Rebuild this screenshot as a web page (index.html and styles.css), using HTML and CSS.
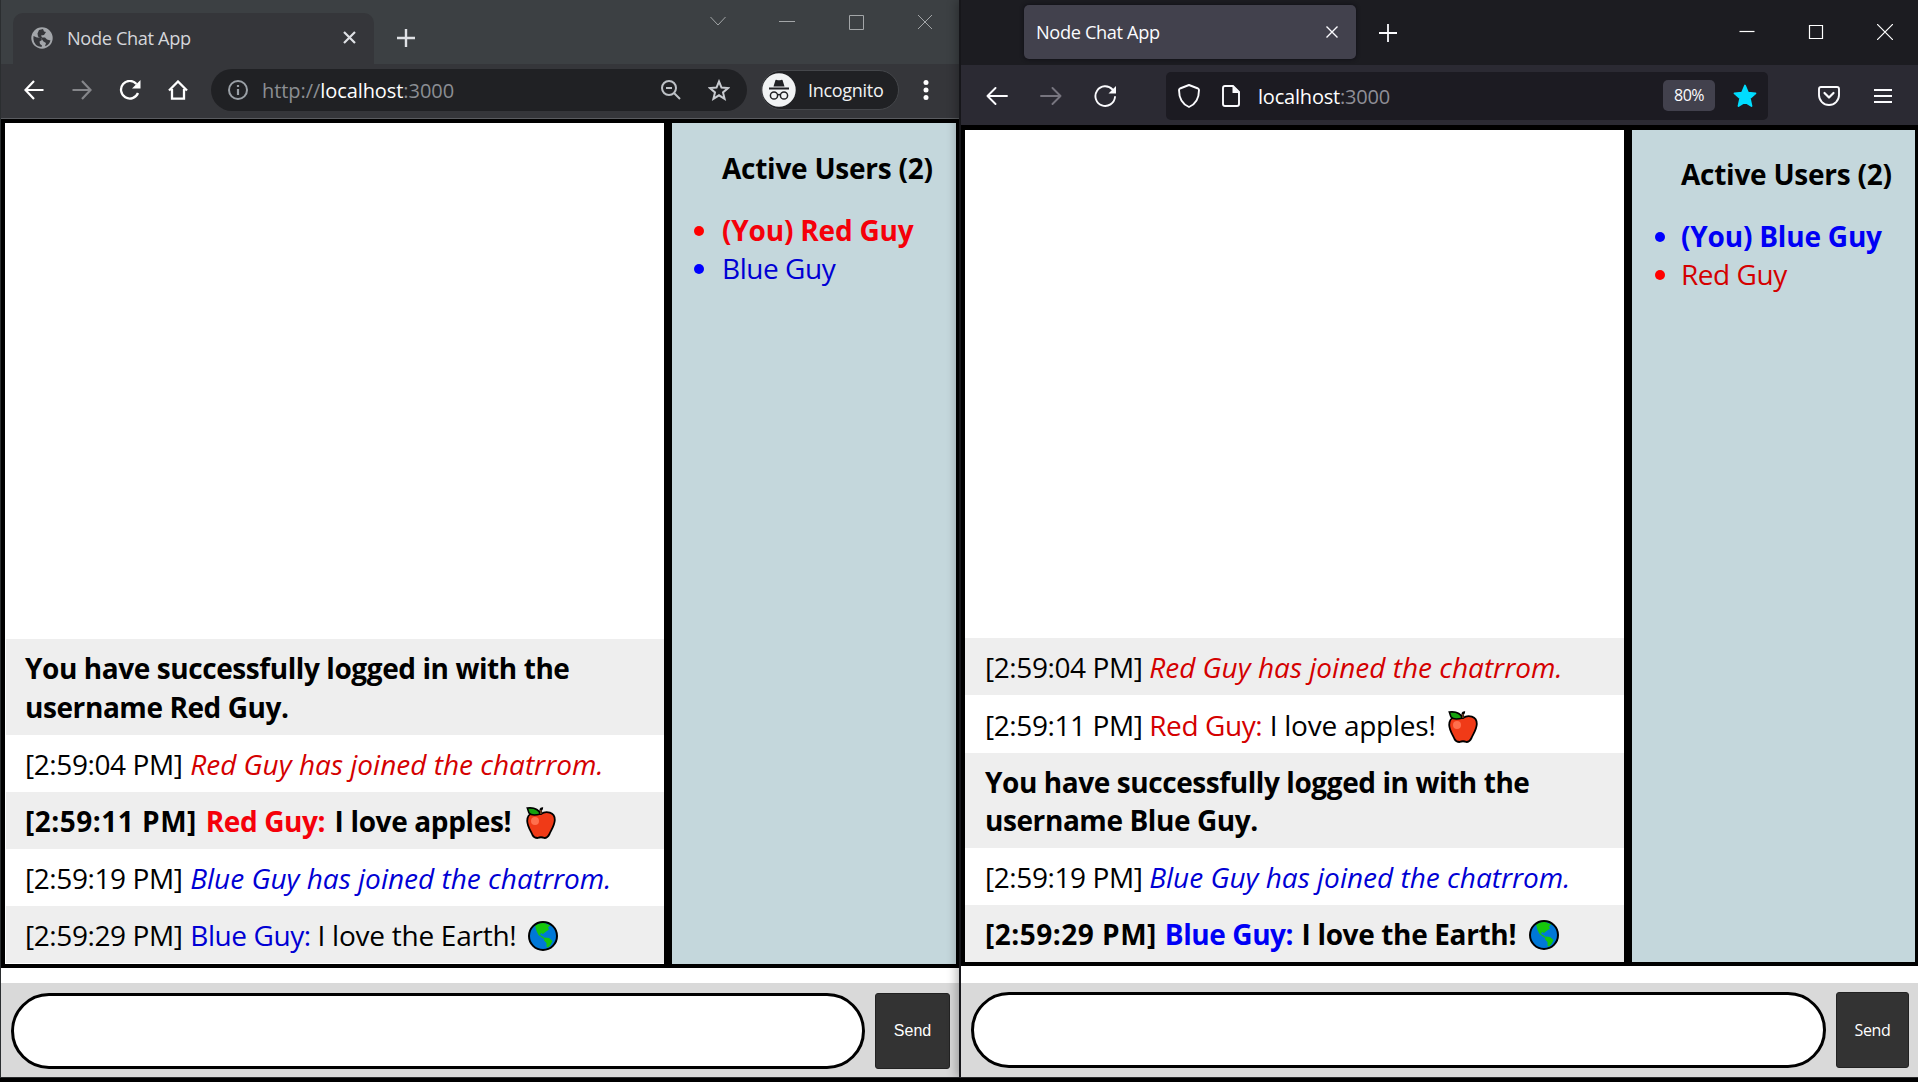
FILE: index.html
```html
<!DOCTYPE html>
<html lang="en">
<head>
<meta charset="utf-8">
<title>Node Chat App</title>
<link rel="stylesheet" href="styles.css">
</head>
<body>
<svg class="symbols" width="0" height="0">
  <symbol id="apple" viewBox="0 0 30 32">
    <path d="M15 7C11 4 1 5 1.200 14C1.500 20 5 24 6.500 28Q8 31 11.500 31Q15 29.500 18.500 31Q21.500 31 23.500 27C25 23 28.500 19 28.800 13C29 5 20 3.500 15 7Z" fill="#f03a17" stroke="#000" stroke-width="1.800"/>
    <circle cx="9" cy="14" r="4" fill="#ff6f4d"/>
    <path d="M1.300 1C6 .5 12 .5 14.500 7Q6 9.500 3 6Z" fill="#16a10e" stroke="#000" stroke-width="1.600"/>
    <path d="M14.800 7V3Q14.800 1.200 17 1.500" fill="none" stroke="#000" stroke-width="2.600"/>
    <path d="M14.900 7V3" stroke="#8e562e" stroke-width="1.200"/>
  </symbol>
  <symbol id="earth" viewBox="0 0 30 30">
    <circle cx="15" cy="15" r="14" fill="#0078d7"/>
    <path d="M7 4.500Q12 1 17 2L19 3.500H23L20 6.500 21 8.500 17.500 11 15 13 13 12 12 14 15 15.500 17 18 15 17.500 10.500 14 8.500 10Z" fill="#16c60c"/>
    <path d="M16.500 16.500L21 17 24.500 20 22.500 24 20 26.500 18.500 26 18.500 22 16 19.500Z" fill="#16c60c"/>
    <circle cx="15" cy="15" r="14" fill="none" stroke="#000" stroke-width="2"/>
  </symbol>
</svg>

<section class="window chrome">
  <div class="titlebar">
    <div class="tab">
      <svg class="favicon" width="22" height="22" viewBox="0 0 22 22"><circle cx="11" cy="11" r="10.700" fill="#a3a6aa"/><path d="M2.500 9L6 10.500H9.500L11 13 8.500 14.500 9 17 11 18.500 10.500 20Q3 19 2.400 12Z M8 3L12 2 13 4.500 15 5 13 8 10 8.500 11 10.500H14L16 12.500 19.500 13.500Q18 18 14 19.300L15 16 12.500 14.500 10 11 7 9.500 6.500 6.500Z" fill="#35363a"/></svg>
      <span class="tab-title">Node Chat App</span>
      <svg class="tab-close" width="13" height="13" viewBox="0 0 13 13"><path d="M1 1L12 12M12 1L1 12" stroke="#dfe1e5" stroke-width="2.200"/></svg>
    </div>
    <svg class="new-tab" width="18" height="18" viewBox="0 0 18 18"><path d="M9 0V18M0 9H18" stroke="#dfe1e5" stroke-width="2.400"/></svg>
    <div class="controls">
      <svg width="16" height="16" viewBox="0 0 16 16"><path d="M.5 3L8 11 15.500 3"/></svg>
      <svg width="16" height="16" viewBox="0 0 16 16"><path d="M0 7.500H16"/></svg>
      <svg width="16" height="16" viewBox="0 0 16 16"><path d="M1.500 1.500H15.500V15.500H1.500Z"/></svg>
      <svg width="16" height="16" viewBox="0 0 16 16"><path d="M1 1L15 15M15 1L1 15"/></svg>
    </div>
  </div>
  <div class="toolbar">
    <svg class="tool back" width="20" height="20" viewBox="0 0 20 20"><path d="M19.500 10H2M10 1L1.500 10 10 19" fill="none" stroke="#fff" stroke-width="2.200"/></svg>
    <svg class="tool forward" width="20" height="20" viewBox="0 0 20 20"><path d="M.5 10H18M10 1L18.500 10 10 19" fill="none" stroke="#85868a" stroke-width="2.200"/></svg>
    <svg class="tool reload" width="22" height="20" viewBox="0 0 22 20"><path d="M17.500 4A8.800 8.800 0 1 0 19 13" fill="none" stroke="#fff" stroke-width="2.300"/><path d="M21.500 0V8.500H13Z" fill="#fff"/></svg>
    <svg class="tool home" width="20" height="20" viewBox="0 0 20 20"><path d="M1 10.500L10 1.500 19 10.500M4 9V18.700H16V9" fill="none" stroke="#fff" stroke-width="2.300"/></svg>
    <div class="omnibox">
      <svg class="info" width="20" height="20" viewBox="0 0 20 20"><circle cx="10" cy="10" r="9" fill="none" stroke="#9aa0a6" stroke-width="2"/><path d="M10 5V7M10 9V15" stroke="#9aa0a6" stroke-width="2.200"/></svg>
      <span class="url">http://<b>localhost</b>:3000</span>
      <svg class="zoom-out" width="20" height="20" viewBox="0 0 20 20"><g fill="none" stroke="#bdc1c6" stroke-width="2"><circle cx="8" cy="8" r="7"/><path d="M5 8H11M13 13L19 19"/></g></svg>
      <svg class="star" width="22" height="22" viewBox="0 0 22 22"><path d="M11 2.500L13.500 8.600 20 9.100 15 13.400 16.600 19.800 11 16.300 5.400 19.800 7 13.400 2 9.100 8.500 8.600Z" fill="none" stroke="#c8cbd0" stroke-width="2"/></svg>
    </div>
    <div class="incognito">
      <svg width="34" height="34" viewBox="0 0 34 34"><circle cx="17" cy="17" r="16.700" fill="#f1f3f4"/><path d="M11.500 13.500L13.500 7Q14 6.300 15 7Q17 7.700 19 7Q20 6.300 20.500 7L22.500 13.500ZM7 14.500H27V16.500H7Z" fill="#202124"/><g fill="none" stroke="#202124" stroke-width="1.500"><circle cx="12" cy="22.500" r="3.600"/><circle cx="22" cy="22.500" r="3.600"/><path d="M15.500 22Q17 21 18.500 22"/></g></svg>
      <span class="incognito-label">Incognito</span>
    </div>
    <svg class="menu" width="6" height="20" viewBox="0 0 6 20"><g fill="#fff"><circle cx="3" cy="2.500" r="2.500"/><circle cx="3" cy="10" r="2.500"/><circle cx="3" cy="17.500" r="2.500"/></g></svg>
  </div>
  <main class="page">
    <div class="chat">
      <ul class="messages">
        <li class="message own">You have successfully logged in with the<br>username Red Guy.</li>
        <li class="message"><span class="time">[2:59:04 PM]</span><i class="red">Red Guy has joined the chatrrom.</i></li>
        <li class="message own"><span class="time">[2:59:11 PM]</span><span class="name red">Red Guy:</span><span class="text apples">I love apples!</span><svg class="emoji" width="30" height="32"><use href="#apple"/></svg></li>
        <li class="message"><span class="time">[2:59:19 PM]</span><i class="blue">Blue Guy has joined the chatrrom.</i></li>
        <li class="message"><span class="time">[2:59:29 PM]</span><span class="name blue">Blue Guy:</span><span class="text planet">I love the Earth!</span><svg class="emoji" width="30" height="30"><use href="#earth"/></svg></li>
      </ul>
      <aside class="users">
        <h2>Active Users (2)</h2>
        <ul>
          <li class="red you">(You) Red Guy</li>
          <li class="blue">Blue Guy</li>
        </ul>
      </aside>
    </div>
    <form class="composer">
      <input class="entry" type="text" aria-label="Message">
      <button class="send" type="button">Send</button>
    </form>
  </main>
</section>

<section class="window firefox">
  <div class="titlebar">
    <div class="tab">
      <span class="tab-title">Node Chat App</span>
      <svg class="tab-close" width="12" height="12" viewBox="0 0 12 12"><path d="M.5 .5L11.500 11.500M11.500 .5L.5 11.500" stroke="#fbfbfe" stroke-width="1.400"/></svg>
    </div>
    <svg class="new-tab" width="18" height="18" viewBox="0 0 18 18"><path d="M9 0V18M0 9H18" stroke="#fbfbfe" stroke-width="1.800"/></svg>
    <div class="controls">
      <svg width="16" height="16" viewBox="0 0 16 16"><path d="M.5 7.500H15.500"/></svg>
      <svg width="16" height="16" viewBox="0 0 16 16"><path d="M1.500 1.500H14.500V14.500H1.500Z"/></svg>
      <svg width="16" height="16" viewBox="0 0 16 16"><path d="M0 0L16 16M16 0L0 16"/></svg>
    </div>
  </div>
  <div class="toolbar">
    <svg class="tool back" width="22" height="18" viewBox="0 0 22 18"><path d="M21 9H1.500M9.500 1L1.500 9 9.500 17" fill="none" stroke="#fbfbfe" stroke-width="1.900" stroke-linecap="round" stroke-linejoin="round"/></svg>
    <svg class="tool forward" width="22" height="18" viewBox="0 0 22 18"><path d="M1 9H20.500M12.500 1L20.500 9 12.500 17" fill="none" stroke="#77757f" stroke-width="1.900" stroke-linecap="round" stroke-linejoin="round"/></svg>
    <svg class="tool reload" width="23" height="22" viewBox="0 0 23 22"><path d="M18.500 4.500A9.800 9.800 0 1 0 21 12" fill="none" stroke="#fbfbfe" stroke-width="1.900" stroke-linecap="round"/><path d="M22 1V8.500H14.500Z" fill="#fbfbfe"/></svg>
    <div class="omnibox">
      <svg class="shield" width="22" height="24" viewBox="0 0 22 24"><path d="M11 1L20 4.500Q21 5 21 6C21 14 18 20 11 23C4 20 1 14 1 6Q1 5 2 4.500Z" fill="none" stroke="#fbfbfe" stroke-width="1.900" stroke-linejoin="round"/></svg>
      <svg class="doc" width="18" height="22" viewBox="0 0 18 22"><path d="M3 1H11L17 7V19Q17 21 15 21H3Q1 21 1 19V3Q1 1 3 1Z" fill="none" stroke="#fbfbfe" stroke-width="1.900"/><path d="M10.500 1V8H17Z" fill="#fbfbfe"/></svg>
      <span class="url"><b>localhost</b>:3000</span>
      <span class="zoom-level">80%</span>
      <svg class="star" width="24" height="24" viewBox="0 0 24 24"><path d="M12 1.500L15 8.700 22.500 9.300 16.800 14.300 18.500 22 12 18 5.500 22 7.200 14.300 1.500 9.300 9 8.700Z" fill="#00ddff" stroke="#00ddff" stroke-width="1.800" stroke-linejoin="round"/></svg>
    </div>
    <svg class="pocket" width="22" height="20" viewBox="0 0 22 20"><path d="M3 1H19Q21 1 21 3V9A10 10 0 0 1 1 9V3Q1 1 3 1Z" fill="none" stroke="#fbfbfe" stroke-width="1.900"/><path d="M6.500 7L11 11.500 15.500 7" fill="none" stroke="#fbfbfe" stroke-width="2.200" stroke-linecap="round" stroke-linejoin="round"/></svg>
    <svg class="menu" width="18" height="16" viewBox="0 0 18 16"><path d="M0 2H18M0 8H18M0 14H18" stroke="#fbfbfe" stroke-width="2"/></svg>
  </div>
  <main class="page">
    <div class="chat">
      <ul class="messages">
        <li class="message"><span class="time">[2:59:04 PM]</span><i class="red">Red Guy has joined the chatrrom.</i></li>
        <li class="message"><span class="time">[2:59:11 PM]</span><span class="name red">Red Guy:</span><span class="text apples">I love apples!</span><svg class="emoji" width="30" height="32"><use href="#apple"/></svg></li>
        <li class="message own">You have successfully logged in with the<br>username Blue Guy.</li>
        <li class="message"><span class="time">[2:59:19 PM]</span><i class="blue">Blue Guy has joined the chatrrom.</i></li>
        <li class="message own"><span class="time">[2:59:29 PM]</span><span class="name blue">Blue Guy:</span><span class="text planet">I love the Earth!</span><svg class="emoji" width="30" height="30"><use href="#earth"/></svg></li>
      </ul>
      <aside class="users">
        <h2>Active Users (2)</h2>
        <ul>
          <li class="blue you">(You) Blue Guy</li>
          <li class="red">Red Guy</li>
        </ul>
      </aside>
    </div>
    <form class="composer">
      <input class="entry" type="text" aria-label="Message">
      <button class="send" type="button">Send</button>
    </form>
  </main>
</section>
</body>
</html>
```
FILE: styles.css
```css
* { box-sizing: border-box; }

body {
  margin: 0;
  height: 1082px;
  display: flex;
  align-items: flex-start;
  overflow: hidden;
  background: #000;
  font-family: "Open Sans", "Noto Sans", sans-serif;
}

svg { display: block; flex: none; }
.symbols { position: absolute; }

/* Browser windows */
.window {
  flex: none;
  height: 1078px;
  display: flex;
  flex-direction: column;
  border-bottom: 1px solid #2a2b2d;
}
.chrome { width: 959px; border-left: 1px solid #2b2e30; }
.firefox {
  width: 959px;
  border-left: 2px solid #16161a;
  box-shadow: -2px 0 10px rgba(0, 0, 0, .3);
}
.titlebar, .toolbar { display: flex; align-items: center; flex: none; }
.tab { display: flex; align-items: center; }
.tab-title { white-space: nowrap; }
.controls { display: flex; }
.controls path { fill: none; }
.url { white-space: nowrap; }
.url b { font-weight: 400; color: #fff; }

/* Chrome */
.chrome .titlebar { height: 64px; background: #3c4043; align-items: flex-start; }
.chrome .tab {
  width: 361px;
  height: 51px;
  margin: 13px 0 0 12px;
  padding: 0 0 2px 18px;
  border-radius: 10px 10px 0 0;
  background: #35363a;
}
.chrome .tab-title {
  width: 276px;
  margin-left: 14px;
  font-size: 18.2px;
  letter-spacing: -.35px;
  color: #d5d7db;
}
.chrome .new-tab { margin: 29px 0 0 23px; }
.chrome .controls { gap: 53px; margin: 14px 26px 0 auto; }
.chrome .controls path { stroke: #a3a6a8; stroke-width: 1; }
.chrome .toolbar {
  height: 55px;
  padding: 0 0 2px 23px;
  background: #35363a;
  border-bottom: 1px solid #5a5c60;
}
.chrome .forward { margin-left: 28px; }
.chrome .reload { margin-left: 27px; }
.chrome .home { margin-left: 27px; }
.chrome .omnibox {
  width: 536px;
  height: 42px;
  margin-left: 23px;
  padding-left: 17px;
  display: flex;
  align-items: center;
  border-radius: 21px;
  background: #202124;
}
.chrome .url {
  width: 399px;
  margin-left: 14px;
  padding-top: 1px;
  font-size: 20px;
  letter-spacing: -.07px;
  color: #8b8e93;
}
.chrome .star { margin-left: 27px; }
.incognito {
  width: 138px;
  height: 40px;
  margin-left: 14px;
  display: flex;
  align-items: center;
  border: 1px solid #45474b;
  border-radius: 20px;
  background: #202124;
}
.incognito-label { margin-left: 12px; font-size: 18px; letter-spacing: -.3px; color: #f1f3f4; }
.chrome .menu { margin-left: 24px; }

/* Firefox */
.firefox .titlebar { height: 65px; background: #1c1c21; align-items: flex-start; }
.firefox .tab {
  width: 332px;
  height: 54px;
  margin: 5px 0 0 63px;
  padding-left: 12px;
  border-radius: 5px;
  background: #42414d;
  box-shadow: 0 0 4px #0e0d14;
}
.firefox .tab-title { width: 290px; font-size: 18.2px; letter-spacing: -.35px; color: #fbfbfe; }
.firefox .new-tab { margin: 24px 0 0 23px; }
.firefox .controls { gap: 53px; margin: 24px 25px 0 auto; }
.firefox .controls path { stroke: #fff; stroke-width: 1.2; }
.firefox .toolbar { height: 60px; padding: 1px 0 0 25px; background: #2b2a33; }
.firefox .forward { margin-left: 32px; }
.firefox .reload { margin-left: 32px; }
.firefox .omnibox {
  width: 602px;
  height: 48px;
  margin-left: 49px;
  padding-left: 12px;
  display: flex;
  align-items: center;
  border-radius: 5px;
  background: #1c1b22;
}
.firefox .doc { margin-left: 22px; }
.firefox .url {
  width: 405px;
  margin-left: 18px;
  padding-top: 1px;
  font-size: 20px;
  letter-spacing: -.2px;
  color: #8f8e96;
}
.zoom-level {
  width: 52px;
  height: 31px;
  line-height: 31px;
  text-align: center;
  border-radius: 5px;
  background: #42414d;
  color: #fbfbfe;
  font-size: 16px;
  letter-spacing: -.5px;
}
.firefox .star { margin-left: 18px; }
.pocket { margin-left: 50px; }
.firefox .menu { margin-left: 34px; }

/* Chat page */
.page {
  flex: 1;
  min-height: 0;
  display: flex;
  flex-direction: column;
  justify-content: space-between;
  background: #fff;
}
.chat {
  display: flex;
  gap: 8px;
  height: 849px;
  border: solid #000;
  border-width: 4px 3px 4px 4px;
  background: #000;
  font-size: 28px;
  line-height: 38.2px;
}
.firefox .chat { height: 841px; border-top-width: 5px; }
.messages {
  width: 659px;
  margin: 0;
  padding: 0;
  display: flex;
  flex-direction: column;
  justify-content: flex-end;
  list-style: none;
  background: #fff;
}
.chrome .messages { padding: 0 0 1px 1px; }
.message {
  display: flex;
  padding: 10.1px 0 8.8px 20px;
  white-space: nowrap;
  letter-spacing: -.4px;
}
.chrome .message { padding-left: 19px; }
.message:nth-child(odd) { background: #eee; }
.message.own { font-weight: 700; letter-spacing: -.42px; }
.own:not(:has(span)) { display: block; }
.message i { letter-spacing: 0; }
.message .text { letter-spacing: -.25px; }
.message.own .text { letter-spacing: -.35px; }
.time { width: 164.2px; }
.chrome .time { width: 165.2px; }
.own .time { width: 179.8px; letter-spacing: .5px; }
.chrome .own .time { width: 180.8px; }
.name.red { width: 120.5px; }
.name.blue { width: 127.3px; }
.own .name.red { width: 128.8px; }
.own .name.blue { width: 136.8px; }
.apples { width: 178.7px; }
.planet { width: 210.7px; }
.own .apples { width: 191.2px; }
.own .planet { width: 227.2px; }
.emoji { margin-top: 5px; }
.red { color: #d40000; }
.blue { color: #0000d4; }
.own .red, .you.red { color: #f5000a; }
.own .blue, .you.blue { color: #0000f5; }

.users { flex: 1; background: #c4d7dc; }
.users h2 {
  margin: 26px 0 0 50px;
  font-size: inherit;
  font-weight: 700;
  letter-spacing: -.25px;
  white-space: nowrap;
}
.firefox .users h2 { margin: 25px 0 0 49px; }
.users ul { margin: 23.7px 0 0; padding-left: 48px; list-style: none; }
.users li { display: flex; align-items: center; white-space: nowrap; letter-spacing: -.45px; }
.users li.you { font-weight: 700; letter-spacing: -.2px; }
.users li::before {
  content: "";
  width: 10px;
  height: 10px;
  margin: 2px 18px 0 -26px;
  border-radius: 50%;
  background: #00f;
}
.firefox .users li::before { margin-left: -25px; margin-right: 16px; }
.users li.red::before { background: #f00; }

.composer {
  height: 94px;
  padding: 10px 9px 0 10px;
  display: flex;
  gap: 10px;
  background: #d9d9d9;
}
.entry {
  flex: 1;
  min-width: 0;
  height: 76px;
  padding: 0 30px;
  border: 3px solid #000;
  border-radius: 38px;
  background: #fff;
}
.send {
  width: 75px;
  height: 76px;
  padding: 0;
  border: 1px solid #222;
  border-radius: 3px;
  background: #333;
  color: #fff;
  font: 16px "Liberation Sans", sans-serif;
}
.firefox .composer { padding-top: 9px; }
.firefox .send { width: 73px; font: 16px "Open Sans", sans-serif; letter-spacing: -.4px; }
```
